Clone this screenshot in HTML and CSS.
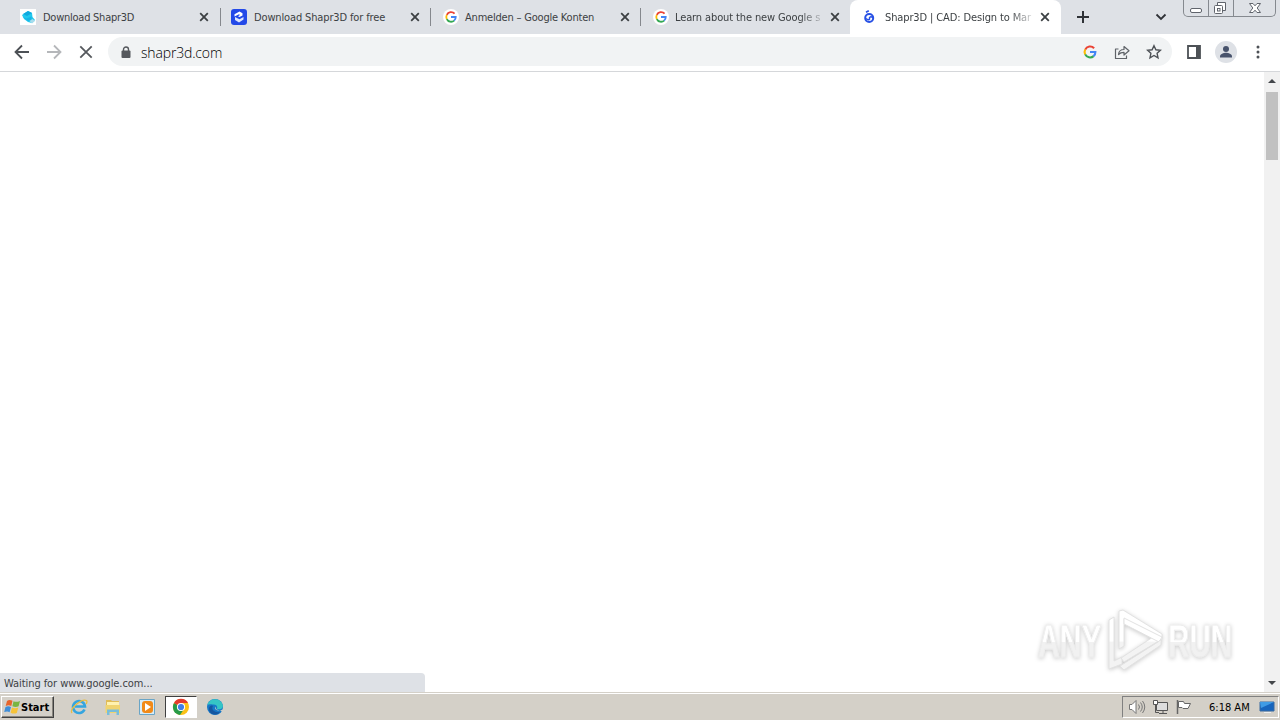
FILE: index.html
```html
<!DOCTYPE html>
<html lang="en">
<head>
<meta charset="utf-8">
<title>Shapr3D | CAD: Design to Manufacturing</title>
<link rel="stylesheet" href="styles.css">
</head>
<body>
<svg class="defs" width="0" height="0">
  <linearGradient id="fadegrey" x1="0" y1="0" x2="0" y2="64" gradientUnits="userSpaceOnUse"><stop offset=".5" stop-color="#fff"/><stop offset=".52" stop-color="#f3f3f3"/></linearGradient>
  <symbol id="google" viewBox="0 0 16 16">
    <path d="M12.1 4.2A5.4 5.4 0 0 0 3.2 5.6" fill="none" stroke="#ea4335" stroke-width="2.1"/>
    <path d="M3.2 5.5a5.4 5.4 0 0 0 0 5" fill="none" stroke="#fbbc05" stroke-width="2.1"/>
    <path d="M3.2 10.4a5.4 5.4 0 0 0 8.4 1.7" fill="none" stroke="#34a853" stroke-width="2.1"/>
    <path d="M8 8h5.4a5.4 5.4 0 0 1-1.9 4.2" fill="none" stroke="#4285f4" stroke-width="2.1"/>
  </symbol>
  <symbol id="close" viewBox="0 0 10 10"><path d="M1.2 1.2l7.6 7.6M8.800 1.2L1.2 8.8" fill="none" stroke="#3c4043" stroke-width="1.8"/></symbol>
</svg>
<div class="screen">
  <header class="tabstrip">
    <div class="tab first">
      <svg class="fav" viewBox="0 0 16 16"><rect width="16" height="16" fill="#fff"/><path d="M2 6l6-4 4 2 .5 4 2.500 3-3 3-4-1-4-3z" fill="#22c8ee"/><path d="M3 5l5-3 4 2-5 3z" fill="#10a9df"/><path d="M2.500 8l4 1.500 5-2v3L8 12z" fill="#17b4e6"/><path d="M9.500 12l3-2 2.500 2-3 2.500z" fill="#a8dcec"/></svg>
      <span class="title t1">Download Shapr3D</span><svg class="x"><use href="#close"/></svg>
    </div>
    <div class="tab second">
      <svg class="fav" viewBox="0 0 16 16"><rect width="16" height="16" rx="3" fill="#2349e8"/><path d="M3.500 7.500V5.200L8.500 2.500l3 1.700v2.300L8.500 8 7 7.200l2-1.200L8 5.300z" fill="#fff"/><path d="M4 8l3 1.500 1.500.8L12.500 8v2.500L8 13.500l-4-2.500z" fill="#dce5ff"/></svg>
      <span class="title t2">Download Shapr3D for free</span><svg class="x"><use href="#close"/></svg>
    </div>
    <div class="tab">
      <svg class="fav disc"><use href="#google"/></svg>
      <span class="title t3">Anmelden – Google Konten</span><svg class="x"><use href="#close"/></svg>
    </div>
    <div class="tab last">
      <svg class="fav disc"><use href="#google"/></svg>
      <span class="title t4 fade">Learn about the new Google s</span><svg class="x"><use href="#close"/></svg>
    </div>
    <div class="tab active">
      <svg class="fav" viewBox="0 0 16 16"><circle cx="7.200" cy="9" r="4" fill="none" stroke="#2851e5" stroke-width="2"/><path d="M4 9.500c2 2 4 1.300 3.500 0S9 6.800 11 9" fill="none" stroke="#2851e5" stroke-width="1.500"/><path d="M4 3.300l2.800-1.500" stroke="#2851e5" stroke-width="1.700"/></svg>
      <span class="title t5 fade">Shapr3D | CAD: Design to Mar</span><svg class="x"><use href="#close"/></svg>
    </div>
    <svg class="plus" width="14" height="14"><path d="M7 1v12M1 7h12" stroke="#2f3237" stroke-width="2"/></svg>
    <svg class="chev" width="12" height="8"><path d="M1.500 1.500L6 6l4.500-4.500" fill="none" stroke="#2f3237" stroke-width="1.800"/></svg>
    <div class="winbtns">
      <div class="wb min"><svg width="24" height="16"><rect x="6.500" y="8.500" width="11" height="4" rx="1.500" fill="#fff" stroke="#60646c"/></svg></div>
      <div class="wb"><svg width="24" height="16"><path d="M8.500 5V2.500h8v8H14" fill="#fff" stroke="#60646c"/><rect x="5.500" y="5.500" width="8" height="8" rx="1" fill="#fff" stroke="#60646c"/><rect x="8.500" y="8.500" width="2.500" height="2.500" fill="none" stroke="#60646c"/></svg></div>
      <div class="wb end"><svg width="41" height="16"><path d="M15.500 3.500h3.500l2 2.300 2-2.300h3.500l-3.300 4.500 3.300 4.500H23l-2-2.300-2 2.300h-3.500l3.300-4.500z" fill="#fff" stroke="#60646c"/></svg></div>
    </div>
  </header>
  <nav class="toolbar">
    <svg class="nav" viewBox="0 0 16 16"><path d="M15 8H2M8 1.500L1.500 8 8 14.500" fill="none" stroke="#4d5156" stroke-width="1.800"/></svg>
    <svg class="nav" viewBox="0 0 16 16"><path d="M1 8h13M8 1.500L14.500 8 8 14.500" fill="none" stroke="#b5b7ba" stroke-width="1.800"/></svg>
    <svg class="nav" viewBox="0 0 16 16"><path d="M2.300 2.300l11.400 11.400M13.700 2.300L2.300 13.700" fill="none" stroke="#55585d" stroke-width="1.800"/></svg>
    <div class="omnibox">
      <svg class="lock" width="10" height="13"><path d="M2.500 5V3.500a2.500 2.500 0 0 1 5 0V5" fill="none" stroke="#55585d" stroke-width="1.400"/><rect x="0.500" y="4.500" width="9" height="7.500" rx="1" fill="#55585d"/></svg>
      <span class="url">shapr3d.com</span>
      <svg class="act"><use href="#google"/></svg>
      <svg class="act" viewBox="0 0 16 16"><path d="M4.500 5H1.500v9.500h11V11.500M4.500 10.500c.3-3.300 2.200-5 5.500-5V2.500l5 4.300-5 4.200V8.300c-2.500 0-4.200.7-5.500 2.200z" fill="none" stroke="#5f6368" stroke-width="1.200" stroke-linejoin="round"/></svg>
      <svg class="act" viewBox="0 0 16 16"><path d="M8 1.700l1.900 4.100 4.500.5-3.300 3 .9 4.500L8 11.500l-4 2.300.9-4.500-3.300-3 4.500-.5z" fill="none" stroke="#4d5156" stroke-width="1.400"/></svg>
    </div>
    <svg class="panel" width="14" height="14"><path d="M1 1h12v12H1z" fill="none" stroke="#4d5156" stroke-width="1.800"/><path d="M9 1h4v12H9z" fill="#4d5156"/></svg>
    <svg class="avatar" width="22" height="22"><circle cx="11" cy="11" r="11" fill="#dee1e6"/><circle cx="11" cy="8" r="3" fill="#47526b"/><path d="M5 16.500v-1.200c0-2.300 3.700-3.500 6-3.500s6 1.200 6 3.500v1.200z" fill="#47526b"/></svg>
    <svg class="dots" width="4" height="14"><g fill="#4d5156"><circle cx="2" cy="2" r="1.500"/><circle cx="2" cy="7" r="1.500"/><circle cx="2" cy="12" r="1.500"/></g></svg>
  </nav>
  <main class="page">
    <div class="view"></div>
    <div class="scroll">
      <svg width="16" height="20"><path d="M4 11l4-4 4 4z" fill="#44474b"/></svg>
      <div class="thumb"></div>
      <svg class="down" width="16" height="18"><path d="M4 7l4 4 4-4z" fill="#44474b"/></svg>
    </div>
    <div class="status">Waiting for www.google.com...</div>
    <div class="mark">
      <span class="word any">ANY</span>
      <svg width="58" height="64"><g fill="url(#fadegrey)" stroke="#e2e2e2" stroke-linejoin="round"><path d="M3 11l5-3v44l8-4v7L3 60z"/><path d="M13 2l4-1 39 24v5L18 53l-3-4 32-21-29-18v27l-5 3z"/><path d="M18 9l38 19-3 5-35-18z"/><path d="M14 57l41-26v5L18 61z"/></g></svg>
      <span class="word run">RUN</span>
    </div>
  </main>
  <footer class="taskbar">
    <div class="start"><svg width="17" height="16"><path d="M3 2c2-1.500 3.500-1 5.500-.2L7.300 7C5.500 6.200 4 6 1.700 7z" fill="#e7652b"/><path d="M9.500 2.200c2 1 4 .8 6.500-.2l-1.400 5.300c-2 1-4 1-6.200 0z" fill="#79b542"/><path d="M1.500 8c2-1 3.700-.8 5.500-.1l-1.400 5.300c-1.500-.8-3-1-5.400-.1z" fill="#3f8ed8"/><path d="M8 8.500c2 1 4 1 6.300.1l-1.500 5.300c-2 1-4 .8-6.200-.2z" fill="#f6c339"/></svg><span>Start</span></div>
    <div class="task ie"><svg width="18" height="18"><path d="M14.500 11.500A6 6 0 1 1 15 8.500H5" fill="none" stroke="#35a5df" stroke-width="2.600"/><path d="M2 15C-1 11 12 0 16.500 2.500c1 1 .4 2-.3 3.500" fill="none" stroke="#e8bd42" stroke-width="1.300"/></svg></div>
    <div class="task"><svg width="18" height="18"><path d="M2 2h5l1 1h7v10H2z" fill="#e0bc57"/><path d="M3 4h12v5H3z" fill="#fff2af"/><path d="M1.500 7h14.500v8H1.500z" fill="#f0d470"/><path d="M3 17v-5.500h12V17h-2.500v-3h-7v3z" fill="#78bddb"/></svg></div>
    <div class="task"><svg width="18" height="18"><path d="M1.500 1.500h15v15h-15z" fill="#d7ecf8" stroke="#6aa5c6"/><rect x="4" y="3" width="11" height="12" rx="3" fill="#f18a18"/><path d="M7 5l6 4-6 4z" fill="#fff"/></svg></div>
    <div class="task pressed"><svg width="18" height="18" viewBox="0 0 18 18"><circle cx="9" cy="9" r="8" fill="#fbc116"/><path d="M2 5a8 8 0 0 0 6 12l4-6-3-2z" fill="#279b48"/><path d="M2 5A8 8 0 0 1 16 5H9v4z" fill="#e33b2e"/><circle cx="9" cy="9" r="4.100" fill="#fff"/><circle cx="9" cy="9" r="3.100" fill="#3f7fe8"/></svg></div>
    <div class="task"><svg width="18" height="18"><circle cx="9" cy="9" r="8" fill="#1677c7"/><path d="M1.500 7C3 0 14-1 16.800 7c.8 4-3 5-6 4 1.500-3-1-5-4-4.500C4 6.200 2.500 6.200 1.500 7z" fill="#35c5c5"/><path d="M7 8c-2 3 .5 7 7 6-4 5-12 2-11-4 .6-2 2-3 4-2z" fill="#1556a0"/><path d="M9 8.500c-.5 2.500 1.500 4.500 5 4l4-1.500v3l-2.500-1-5-1.500z" fill="#d4d0c8"/></svg></div>
    <div class="tray">
      <svg width="18" height="16"><path d="M1.500 5.500H4l4-4v13l-4-4H1.500z" fill="#fff" stroke="#777"/><path d="M10.500 5.500q2 2.500 0 5M12.500 3.500q3.500 4.500 0 9M14.500 2q4.500 6 0 12" fill="none" stroke="#777"/></svg>
      <svg class="net" width="17" height="16"><path d="M4.500 3.500h11v8h-11z" fill="#ddd" stroke="#555"/><path d="M7 14.500h8M11 12v2M3.500 5v8.500H7" fill="none" stroke="#555"/><path d="M1.500 1.500h4v4h-4z" fill="#fff" stroke="#555"/></svg>
      <svg class="flag" width="17" height="16"><path d="M2.500 1v14" stroke="#666" stroke-width="1.500"/><path d="M3.500 2.500h5l1 2h6L13 9.500H8l-1-1H3.500z" fill="#fff" stroke="#666"/></svg>
      <span class="clock">6:18 AM</span>
      <svg class="desk" width="18" height="14"><path d="M2 2h14v9H2z" fill="#1765bd" stroke="#3b6ba0"/><path d="M2 2h14L3 8z" fill="#3f9be5"/><path d="M6 12.500h7" stroke="#eee"/></svg>
    </div>
  </footer>
</div>
</body>
</html>
```
FILE: styles.css
```css
* { box-sizing: border-box; }
body { margin: 0; font-family: "DejaVu Sans Condensed", "DejaVu Sans", sans-serif; font-stretch: condensed; }
svg { flex: none; display: block; }
.defs { position: absolute; }
.screen { width: 1280px; height: 720px; display: flex; flex-direction: column; overflow: hidden; background: #fff; }
.tabstrip { height: 34px; flex: none; display: flex; background: #dee1e6; }
.tab { width: 210px; height: 34px; flex: none; display: flex; align-items: center; padding: 0 10px 0 12px; border-right: 1px solid transparent; background: linear-gradient(#85888d, #85888d) right 8px / 1px 18px no-repeat; background-origin: border-box; }
.tab.first { width: 221px; padding: 0 11px 0 20px; }
.tab.second { padding-left: 10px; }
.tab.last { background: none; padding-right: 10px; }
.tab.active { width: 211px; margin-left: -1px; padding-left: 12px; background: #fff; border-radius: 8px 8px 0 0; }
.fav { width: 16px; height: 16px; }
.disc { background: #fff; border-radius: 50%; padding: 1px; }
.title { flex: 1; min-width: 0; margin: 0 7px; padding-top: 1px; white-space: nowrap; font-size: 11px; line-height: 18px; color: #3c4043; }
.t1 { letter-spacing: -.25px; }
.t2 { letter-spacing: -.14px; }
.t3 { margin-left: 6px; letter-spacing: -.2px; }
.t4 { margin-left: 6px; letter-spacing: -.12px; }
.t5 { letter-spacing: -.12px; }
.fade { -webkit-mask-image: linear-gradient(90deg, #000 84%, transparent 103%); mask-image: linear-gradient(90deg, #000 84%, transparent 103%); }
.x { width: 10px; height: 10px; }
.plus { margin: 10px 0 0 15px; }
.chev { margin: 13px 0 0 65px; }
.winbtns { margin-left: 16px; width: 93px; height: 17px; display: flex; border: 1px solid #85898f; border-top: 0; border-radius: 0 0 5px 5px; }
.wb { width: 25px; border-right: 1px solid #85898f; }
.wb.end { flex: 1; border: 0; }
.toolbar { height: 38px; flex: none; display: flex; align-items: center; padding: 0 20px 2px 14px; border-bottom: 1px solid #d5d7da; }
.nav { width: 16px; height: 16px; margin-right: 16px; }
.omnibox { width: 1064px; height: 29px; margin-left: -2px; border-radius: 15px; background: #f1f3f4; display: flex; align-items: center; padding: 0 10px 0 13px; }
.lock { margin-top: 1px; }
.url { flex: 1; margin-left: 10px; padding-top: 1px; font: 300 14px "Open Sans", sans-serif; font-stretch: normal; letter-spacing: -.16px; color: #000; }
.act { width: 16px; height: 16px; margin-left: 16px; }
.panel { margin-left: 15px; }
.avatar { margin-left: 14px; }
.dots { margin-left: 19px; }
.page { height: 620px; flex: none; display: flex; position: relative; }
.view { flex: 1; }
.scroll { width: 16px; background: #f1f1f1; display: flex; flex-direction: column; }
.thumb { width: 12px; height: 68px; margin: 0 2px; background: #c1c1c1; }
.down { margin-top: auto; }
.status { position: absolute; left: 0; bottom: 0; width: 425px; height: 19px; padding-left: 4px; background: #dee1e6; border-top-right-radius: 4px; font-size: 11px; line-height: 21px; letter-spacing: -.07px; color: #3c4043; white-space: nowrap; }
.mark { position: absolute; left: 1038px; top: 537px; height: 64px; display: flex; align-items: center; filter: drop-shadow(0 1px 2px #ccc); }
.word { width: 68px; font: bold 47px/60px "Liberation Sans", sans-serif; color: transparent; background: linear-gradient(#fff 51%, #f1f1f1 52%); -webkit-background-clip: text; background-clip: text; -webkit-text-stroke: 1px #ececec; transform-origin: left; transform: scaleX(.64); white-space: nowrap; }
.any { width: 102px; margin-right: -34px; }
.run { width: 106px; margin-left: 4px; margin-right: -38px; transform: scaleX(.63); }
.taskbar { height: 28px; flex: none; display: flex; align-items: center; padding-top: 1px; background: #d4d0c8; border-top: 1px solid #d4d0c8; box-shadow: inset 0 1px #fff; }
.start { width: 53px; height: 22px; margin: 0 9px 0 1px; padding-left: 2px; display: flex; align-items: center; border: 1px solid; border-color: #fff #404040 #404040 #fff; box-shadow: inset -1px -1px #88857e; font-size: 11px; font-weight: bold; color: #000; }
.task { width: 32px; height: 22px; margin-right: 2px; display: flex; align-items: center; justify-content: center; }
.pressed { border: 1px solid; border-color: #404040 #fff #fff #404040; background: #fff; }
.tray { margin-left: auto; width: 157px; height: 22px; margin-right: 1px; display: flex; align-items: center; padding-left: 5px; gap: 7px; border: 1px solid; border-color: #808080 #fff #fff #808080; }
.net, .flag { margin-left: -1px; }
.clock { width: 46px; margin-left: 10px; font-size: 11px; color: #000; white-space: nowrap; }
.desk { margin-left: -4px; }
```
